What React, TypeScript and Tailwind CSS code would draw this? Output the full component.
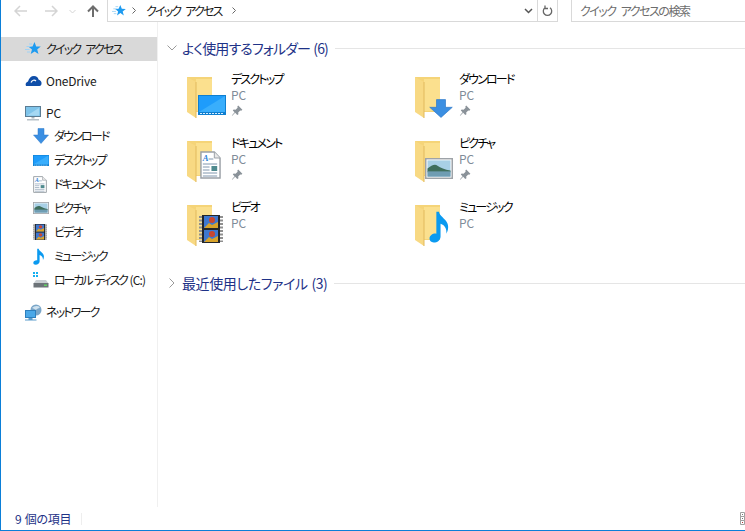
import { ReactNode } from "react";

const Star = ({ size = 16 }: { size?: number }) => (
  <svg width={size} height={size} viewBox="0 0 16 16">
    <path d="M9.500 1l1.700 4.400 4.600.2-3.600 2.900 1.300 4.500-3.900-2.600-3.900 2.600 1.300-4.500L3.600 5.700l3.900-.3z" fill="#1e9bf0" />
    <path d="M7 3H4M5.500 5.500H1.500M4.500 8.500H0M5 11H2" stroke="#9fd2f5" strokeWidth="1" />
  </svg>
);

const Cloud = () => (
  <svg width="17" height="12" viewBox="0 0 17 12">
    <path d="M1 11c-1-2 0-4 2-4.500C4 3 6 1 9 1c2.500 0 4 1.500 4.500 3.500C15.500 5 17 7 16.500 9c-.2 1-1 2-2 2z" fill="#0f4ea8" />
    <path d="M6 7.500c1-2.500 3.500-3 5-1.500" stroke="#fff" strokeWidth="1.200" fill="none" />
  </svg>
);

const Monitor = () => (
  <svg width="16" height="16" viewBox="0 0 16 16">
    <rect x="0.500" y="1.500" width="15" height="10" fill="#7fc4ea" stroke="#5b7c93" />
    <path d="M2 10.500L14 3v7.500z" fill="#a5d8f3" />
    <path d="M6.500 12h3v1.500h-3z" fill="#a8b4bc" />
    <path d="M2 14h12v1.500H2z" fill="#b6c0c7" />
  </svg>
);

const DownArrow = ({ w = 16, h = 16 }: { w?: number; h?: number }) => (
  <svg width={w} height={h} viewBox="0 0 16 16" preserveAspectRatio="none">
    <path d="M5 0.500h6V7h4.500L8 15.500.5 7H5z" fill="#3b8fe2" stroke="#2c78c8" strokeWidth="0.500" />
  </svg>
);

const Desktop = ({ w = 16, h = 11 }: { w?: number; h?: number }) => (
  <svg width={w} height={h} viewBox="0 0 28 20" preserveAspectRatio="none">
    <rect width="28" height="20" fill="#0f7fd0" />
    <path d="M1 1h26v16H1z" fill="#1e9cfb" />
    <path d="M1 17L27 1v16z" fill="#39aefc" />
    <path d="M2 18.500h24" stroke="#d6eeff" strokeWidth="1" strokeDasharray="2 1" />
  </svg>
);

const Doc = ({ w = 14, h = 17 }: { w?: number; h?: number }) => (
  <svg width={w} height={h} viewBox="0 0 22 28" preserveAspectRatio="none">
    <path d="M1 1h14l6 6v20H1z" fill="#fff" stroke="#9aa0a6" strokeWidth="1.500" />
    <path d="M15 1v6h6" fill="#e8e8e8" stroke="#9aa0a6" />
    <text x="3" y="10" fontSize="9" fontStyle="italic" fontWeight="700" fill="#2f7fd6" fontFamily="Liberation Serif, serif">A</text>
    <path d="M9 8h5M3 13h15M3 16h7M3 19h7M3 22h15M3 25h15" stroke="#7d93ab" strokeWidth="1" />
    <rect x="12" y="15" width="6" height="5" fill="#4f8a8e" />
  </svg>
);

const Picture = ({ w = 16, h = 12 }: { w?: number; h?: number }) => (
  <svg width={w} height={h} viewBox="0 0 28 22" preserveAspectRatio="none">
    <rect x="0.750" y="0.750" width="26.500" height="20.500" fill="#fff" stroke="#9ea3a8" strokeWidth="1.500" />
    <rect x="2.500" y="2.500" width="23" height="17" fill="#a8d0e6" />
    <path d="M2.500 11c4-3 7-5 10-3s7 4 13 5v2H2.500z" fill="#3f6f5d" />
    <rect x="2.500" y="14" width="23" height="5.500" fill="#6f9db3" />
  </svg>
);

const Film = ({ w = 14, h = 16 }: { w?: number; h?: number }) => (
  <svg width={w} height={h} viewBox="0 0 24 28" preserveAspectRatio="none">
    <rect x="3" width="18" height="28" fill="#23262b" />
    <path d="M1.500 1v26M22.500 1v26" stroke="#8f8f8f" strokeWidth="3" strokeDasharray="2 1.500" />
    <rect x="5" y="1" width="14" height="12" fill="#3e78d0" />
    <rect x="5" y="15" width="14" height="12" fill="#3e78d0" />
    <path d="M5 13l5-5 3 2 6-3v6zM5 27l5-5 3 2 6-3v6z" fill="#d8a32a" />
    <circle cx="13" cy="5" r="3" fill="#c9462f" />
    <circle cx="13" cy="19" r="3" fill="#c9462f" />
  </svg>
);

const Note = ({ w = 12, h = 17 }: { w?: number; h?: number }) => (
  <svg width={w} height={h} viewBox="0 0 20 30" preserveAspectRatio="none">
    <path d="M7 1.500h2.500c.5 4 6 6 8 10.500 1.500 3.500.5 7-1 9.500 .5-4-1-7.500-5.500-9V24c0 3.500-3 5.500-6.500 5.500C1.800 29.500.5 28 .5 26c0-2.800 3-4.800 6.500-4.500z" fill="#0a9af0" />
  </svg>
);

const Disk = () => (
  <svg width="16" height="16" viewBox="0 0 16 16">
    <path d="M0 0h2v2H0zM3 0h2v2H3zM0 3h2v2H0zM3 3h2v2H3z" fill="#16b0f0" />
    <path d="M3 8h10l2.500 3.500H.5z" fill="#c9ced2" />
    <rect x="0.500" y="11" width="15" height="4.500" fill="#6d7378" />
    <rect x="11" y="12.500" width="3" height="1.500" fill="#5fd35f" />
  </svg>
);

const Network = () => (
  <svg width="17" height="17" viewBox="0 0 17 17">
    <circle cx="11" cy="6" r="5.500" fill="#7aa6c8" />
    <path d="M7 4c2-2 5-3 8-1-1 2-3 1-4 3-1-1-2-1-4-2z" fill="#cfe2ef" />
    <rect x="0.500" y="6.500" width="10" height="7" fill="#4aa8e8" stroke="#2f7fbc" />
    <path d="M3.500 14h4v1.500h4v1H0v-1h3.500z" fill="#5a9ccc" />
  </svg>
);

const Pin = () => (
  <svg width="12" height="12" viewBox="0 0 10 10" className="block">
    <path d="M6 .5L9.500 4 8.500 4.700 7.700 4.500 6 6.200 6.200 7.800 5.200 8.300 3.500 6.500 1 9 .7 8.700 3 6 1.500 4.500 2.200 3.700 3.800 4 5.500 2.300 5.300 1.300z" fill="#8a9299" />
  </svg>
);

// Windows 10 style manila folder, open with the overlay icon on its lower right
const Folder = ({ children }: { children?: ReactNode }) => (
  <div className="relative w-[40px] h-[41px] shrink-0">
    <svg width="26" height="41" viewBox="0 0 26 41" className="block">
      <path d="M0 0h25v35H0z" fill="#f5d478" />
      <path d="M9 2h16v32H9z" fill="#fbe08e" />
      <path d="M0 0l9 5v36L0 35z" fill="#f8d983" />
      <path d="M9 5v36" stroke="#e2b95c" strokeWidth="1" />
    </svg>
    {children}
  </div>
);

const NavRow = ({
  icon,
  label,
  indent = false,
  active = false,
  latin = false,
}: {
  icon: ReactNode;
  label: ReactNode;
  indent?: boolean;
  active?: boolean;
  latin?: boolean;
}) => (
  <div
    className={`flex h-6 items-center text-[12px] text-[#1a1a1a] ${indent ? "pl-[32px]" : "pl-6"} ${
      active ? "bg-[#d9d9d9]" : ""
    }`}
  >
    <div className="w-[21px] flex justify-start">{icon}</div>
    <span className={`whitespace-nowrap ${latin ? "tracking-[-0.2px]" : "tracking-[-1.8px]"}`}>{label}</span>
  </div>
);

const Tile = ({ title, icon, pinned = false }: { title: string; icon: ReactNode; pinned?: boolean }) => (
  <div className="flex h-16 items-start gap-1 pl-[5px]">
    <div className="pt-[9px]">
      <Folder>{icon}</Folder>
    </div>
    <div className="flex flex-col pt-[3px]">
      <span className="h-4 leading-4 text-[12px] text-black tracking-[-1.8px]">{title}</span>
      <span className="h-4 leading-4 text-[12px] text-[#7f8c99]">PC</span>
      {pinned && (
        <span className="h-4 flex items-center">
          <Pin />
        </span>
      )}
    </div>
  </div>
);

export default function App() {
  return (
    <div
      className="w-[745px] h-[531px] overflow-hidden flex flex-col bg-white border-l border-b border-[#0b7fd8] [font-feature-settings:'palt'] [word-spacing:4px]"
      style={{ fontFamily: '"Noto Sans CJK JP", "Noto Sans", sans-serif' }}
    >
      {/* address bar row */}
      <div className="flex h-[22px] items-center shrink-0">
        <div className="flex w-[106px] items-center pl-[13px] text-[#d6d6d6]">
          <svg width="14" height="12" viewBox="0 0 14 12"><path d="M1 6h12M6 1L1 6l5 5" stroke="#d4d4d4" strokeWidth="1.500" fill="none" /></svg>
          <svg width="14" height="12" viewBox="0 0 14 12" className="ml-[16px]"><path d="M1 6h12M8 1l5 5-5 5" stroke="#d4d4d4" strokeWidth="1.500" fill="none" /></svg>
          <svg width="7" height="5" viewBox="0 0 7 5" className="ml-[11px]"><path d="M.5 1l3 3 3-3" stroke="#d4d4d4" fill="none" /></svg>
          <svg width="12" height="13" viewBox="0 0 12 13" className="ml-[11px]"><path d="M6 12V2M1 6.500L6 1.500l5 5" stroke="#6d6d6d" strokeWidth="2" fill="none" /></svg>
        </div>
        <div className="flex h-[22px] w-[451px] items-center border-b border-r border-l border-[#d9d9d9] pl-[4px] text-[12px] text-[#1a1a1a]">
          <Star size={14} />
          <svg width="4" height="7" viewBox="0 0 4 7" className="ml-[6px]"><path d="M.5.500l3 3-3 3" stroke="#666" fill="none" /></svg>
          <span className="ml-[10px] tracking-[-1.8px]">クイック アクセス</span>
          <svg width="4" height="7" viewBox="0 0 4 7" className="ml-[10px]"><path d="M.5.500l3 3-3 3" stroke="#666" fill="none" /></svg>
          <div className="ml-auto flex h-full items-center">
            <svg width="9" height="6" viewBox="0 0 9 6" className="mr-[4px]"><path d="M1 1l3.500 3.500L8 1" stroke="#555" strokeWidth="1.500" fill="none" /></svg>
            <div className="flex h-full w-5 items-center justify-center border-l border-[#d9d9d9]">
              <svg width="11" height="12" viewBox="0 0 11 12"><path d="M3 2.800a4.200 4.200 0 1 0 5 0M3 .5v3h3" stroke="#666" strokeWidth="1.300" fill="none" /></svg>
            </div>
          </div>
        </div>
        <div className="ml-[13px] flex h-[22px] flex-1 items-center border-b border-l border-[#d9d9d9] pl-2 text-[12px] text-[#6d6d6d] tracking-[-1.5px]">
          クイック アクセスの検索
        </div>
      </div>

      <div className="flex flex-1 min-h-0 pt-[15px]">
        {/* navigation pane */}
        <div className="w-[156px] shrink-0">
          <NavRow active icon={<Star />} label="クイック アクセス" />
          <div className="mt-2">
            <NavRow latin icon={<Cloud />} label="OneDrive" />
          </div>
          <div className="mt-2">
            <NavRow latin icon={<Monitor />} label="PC" />
          </div>
          <div className="-mt-px">
            <NavRow indent icon={<DownArrow />} label="ダウンロード" />
            <NavRow indent icon={<Desktop />} label="デスクトップ" />
            <NavRow indent icon={<Doc />} label="ドキュメント" />
            <NavRow indent icon={<Picture />} label="ピクチャ" />
            <NavRow indent icon={<Film />} label="ビデオ" />
            <NavRow indent icon={<Note />} label="ミュージック" />
            <NavRow
              indent
              icon={<Disk />}
              label={
                <span className="tracking-[-2.1px] [word-spacing:2px]">
                  ローカル ディスク <span className="tracking-[-0.8px]">(C:)</span>
                </span>
              }
            />
          </div>
          <div className="mt-2">
            <NavRow icon={<Network />} label="ネットワーク" />
          </div>
        </div>
        {/* main pane */}
        <div className="flex-1 min-w-0 -mt-[15px] pt-[15px] border-l border-[#f0f0f0] pl-[9px]">
          <div className="flex h-[22px] items-center">
            <svg width="10" height="6" viewBox="0 0 10 6"><path d="M.5.500L5 5 9.500.500" stroke="#9a9a9a" fill="none" /></svg>
            <span className="ml-[5px] text-[14px] text-[#1e3287] whitespace-nowrap tracking-[-0.85px] [word-spacing:1px]">よく使用するフォルダー (6)</span>
            <div className="ml-[7px] flex-1 h-px bg-[#e5e5e5]" />
          </div>
          <div className="grid grid-cols-[228px_1fr] pt-[9px] pl-[15px]">
            <Tile
              title="デスクトップ"
              pinned
              icon={
                <div className="absolute right-[1px] bottom-[3px]">
                  <Desktop w={28} h={20} />
                </div>
              }
            />
            <Tile
              title="ダウンロード"
              pinned
              icon={
                <div className="absolute right-[2px] bottom-0">
                  <DownArrow w={24} h={19} />
                </div>
              }
            />
            <Tile
              title="ドキュメント"
              pinned
              icon={
                <div className="absolute right-[6px] bottom-[3px]">
                  <Doc w={21} h={28} />
                </div>
              }
            />
            <Tile
              title="ピクチャ"
              pinned
              icon={
                <div className="absolute right-[2px] bottom-[3px]">
                  <Picture w={28} h={21} />
                </div>
              }
            />
            <Tile
              title="ビデオ"
              icon={
                <div className="absolute right-[4px] bottom-[3px]">
                  <Film w={24} h={28} />
                </div>
              }
            />
            <Tile
              title="ミュージック"
              icon={
                <div className="absolute right-[5px] bottom-[3px]">
                  <Note w={21} h={33} />
                </div>
              }
            />
          </div>
          <div className="mt-[12px] flex h-[22px] items-center">
            <svg width="6" height="10" viewBox="0 0 6 10" className="ml-[2px]"><path d="M.5.500L5 5 .5 9.500" stroke="#9a9a9a" fill="none" /></svg>
            <span className="ml-[7px] text-[14px] text-[#1e3287] whitespace-nowrap tracking-[-0.4px] [word-spacing:1px]">最近使用したファイル (3)</span>
            <div className="ml-[7px] flex-1 h-px bg-[#e5e5e5]" />
          </div>
        </div>
      </div>

      {/* status bar */}
      <div className="flex h-[23px] shrink-0 items-center pl-[14px] text-[12px] text-[#1e3287] tracking-[-0.3px] [word-spacing:1px]">
        <span>9 個の項目</span>
        <div className="ml-[10px] h-[12px] w-px bg-[#eeeeee]" />
        <svg width="5" height="13" viewBox="0 0 5 13" className="ml-auto">
          <path d="M.5.500h4v4h-4zM.5 4.500h4v4h-4zM.5 8.500h4v4h-4z" fill="none" stroke="#a0a0a0" />
          <path d="M2 2h1v1H2zM2 6h1v1H2z" fill="#777" />
          <path d="M2 10h1v1H2z" fill="#b03030" />
        </svg>
      </div>
    </div>
  );
}
